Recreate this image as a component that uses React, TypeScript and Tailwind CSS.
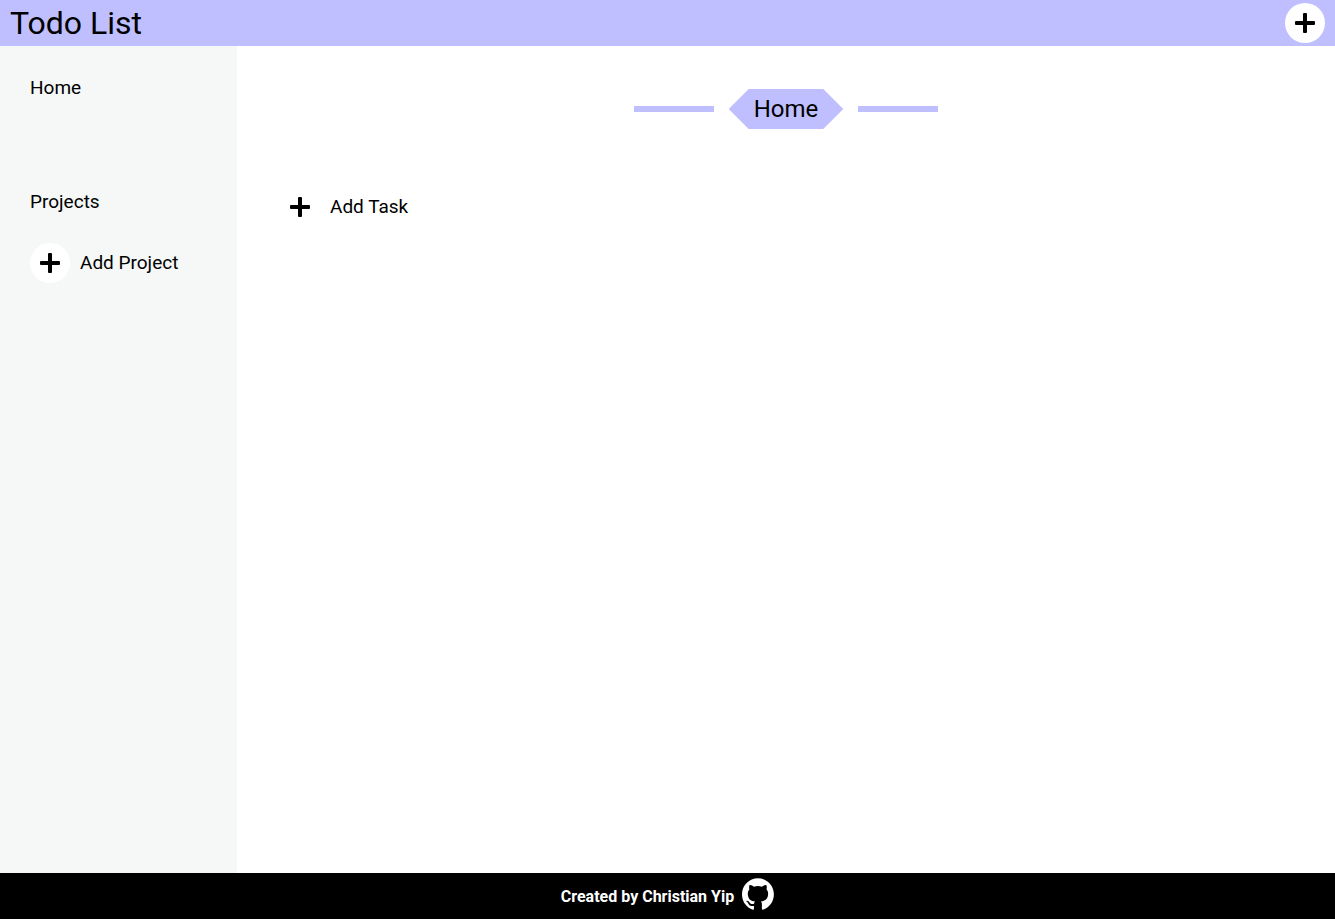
function PlusIcon() {
  return (
    <svg viewBox="0 0 20 20" className="size-5" fill="currentColor" aria-hidden="true">
      <rect x="8" y="0" width="4" height="20" rx="1" />
      <rect x="0" y="8" width="20" height="4" rx="1" />
    </svg>
  );
}

function PlusCircle() {
  return (
    <span className="flex size-10 shrink-0 items-center justify-center rounded-full bg-white">
      <PlusIcon />
    </span>
  );
}

function GithubMark() {
  return (
    <svg viewBox="0 0 98 96" className="size-8" fill="currentColor" aria-hidden="true">
      <path
        fillRule="evenodd"
        clipRule="evenodd"
        d="M48.854 0C21.839 0 0 22 0 49.217c0 21.756 13.993 40.172 33.405 46.69 2.427.49 3.316-1.059 3.316-2.362 0-1.141-.08-5.052-.08-9.127-13.59 2.934-16.42-5.867-16.42-5.867-2.184-5.704-5.42-7.17-5.42-7.17-4.448-3.015.324-3.015.324-3.015 4.934.326 7.523 5.052 7.523 5.052 4.367 7.496 11.404 5.378 14.235 4.074.404-3.178 1.699-5.378 3.074-6.6-10.839-1.141-22.243-5.378-22.243-24.283 0-5.378 1.94-9.778 5.014-13.2-.485-1.222-2.184-6.275.486-13.038 0 0 4.125-1.304 13.426 5.052a46.97 46.97 0 0 1 12.214-1.63c4.125 0 8.33.571 12.213 1.63 9.302-6.356 13.427-5.052 13.427-5.052 2.67 6.763.97 11.816.485 13.038 3.155 3.422 5.015 7.822 5.015 13.2 0 18.905-11.404 23.06-22.324 24.283 1.78 1.548 3.316 4.481 3.316 9.126 0 6.6-.08 11.897-.08 13.526 0 1.304.89 2.853 3.316 2.364 19.412-6.52 33.405-24.935 33.405-46.691C97.707 22 75.788 0 48.854 0z"
      />
    </svg>
  );
}

export default function App() {
  return (
    <div className="flex min-h-screen flex-col bg-white font-['Roboto',sans-serif] text-[19px]/6 text-black">
      <header className="flex h-[46px] items-center justify-between bg-[#bfbfff] px-[10px]">
        <h1 className="text-[32px]/10">Todo List</h1>
        <button type="button" aria-label="Add" className="cursor-pointer">
          <PlusCircle />
        </button>
      </header>

      <div className="flex grow">
        <nav className="flex w-[237px] shrink-0 flex-col items-start bg-[#f5f8f7] p-[30px]">
          <button type="button" className="cursor-pointer">
            Home
          </button>
          <h2 className="mt-[90px]">Projects</h2>
          <button type="button" className="mt-[29px] flex cursor-pointer items-center gap-[10px]">
            <PlusCircle />
            Add Project
          </button>
        </nav>

        <main className="flex grow flex-col px-[43px] pt-[43px]">
          <div className="flex items-center justify-center gap-[15px]">
            <span className="h-[6px] w-20 bg-[#bfbfff]" />
            <h2 className="flex h-10 items-center bg-[#bfbfff] px-[25px] text-2xl [clip-path:polygon(20px_0,calc(100%_-_20px)_0,100%_50%,calc(100%_-_20px)_100%,20px_100%,0_50%)]">
              Home
            </h2>
            <span className="h-[6px] w-20 bg-[#bfbfff]" />
          </div>
          <button
            type="button"
            className="mt-[58px] flex h-10 cursor-pointer items-center gap-5 self-start px-[10px]"
          >
            <PlusIcon />
            Add Task
          </button>
        </main>
      </div>

      <footer className="flex h-[46px] items-center justify-center gap-2 bg-black pt-[2px] text-base font-bold text-white">
        <p>Created by Christian Yip</p>
        <a href="https://github.com" aria-label="GitHub" className="mb-[6px]">
          <GithubMark />
        </a>
      </footer>
    </div>
  );
}
